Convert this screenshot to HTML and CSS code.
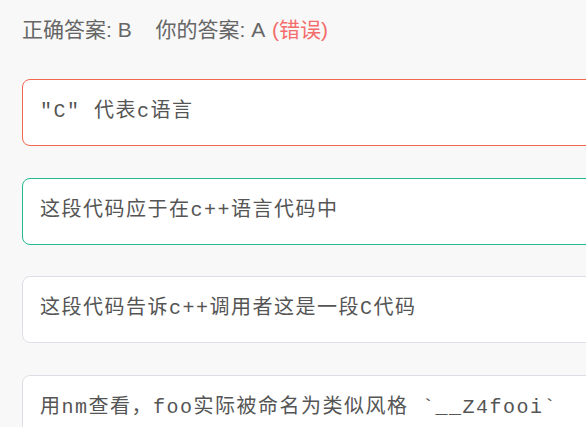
FILE: index.html
```html
<!DOCTYPE html>
<html lang="zh-CN">
<head>
<meta charset="utf-8">
<link rel="stylesheet" href="styles.css">
</head>
<body>
<div class="page">
  <div class="result">
    <span class="item">正确答案: B</span>
    <span class="item">你的答案: A <span class="wrong">(错误)</span></span>
  </div>
  <div class="options">
    <div class="option is-wrong">"C" 代表c语言</div>
    <div class="option is-right">这段代码应于在c++语言代码中</div>
    <div class="option">这段代码告诉c++调用者这是一段C代码</div>
    <div class="option">用nm查看，foo实际被命名为类似风格 `__Z4fooi`</div>
  </div>
</div>
</body>
</html>
```
FILE: styles.css
```css
html, body {
  margin: 0;
  padding: 0;
  background: #f8f8f8;
  overflow: hidden;
}
.page {
  padding: 17px 0 0 22px;
}
.result {
  font-family: "Liberation Sans", "Noto Sans CJK SC", sans-serif;
  font-size: 21px;
  line-height: 26px;
  color: #666666;
  white-space: nowrap;
}
.result .item + .item {
  margin-left: 18px;
}
.wrong {
  color: #f56c6c;
  margin-left: 2px;
}
.options {
  margin-top: 36px;
  display: flex;
  flex-direction: column;
  gap: 31.7px;
  width: 760px;
}
.option {
  background: #ffffff;
  border: 1px solid #dcdfe6;
  border-radius: 8px;
  padding: 20px 17px;
  height: 25px;
  line-height: 24px;
  font-family: "Liberation Mono", "Noto Sans CJK SC", monospace;
  font-size: 20px;
  letter-spacing: 1.5px;
  color: #555555;
  white-space: nowrap;
}
.option.is-wrong {
  border-color: #f2674e;
}
.option.is-right {
  border-color: #26b88e;
}
```
